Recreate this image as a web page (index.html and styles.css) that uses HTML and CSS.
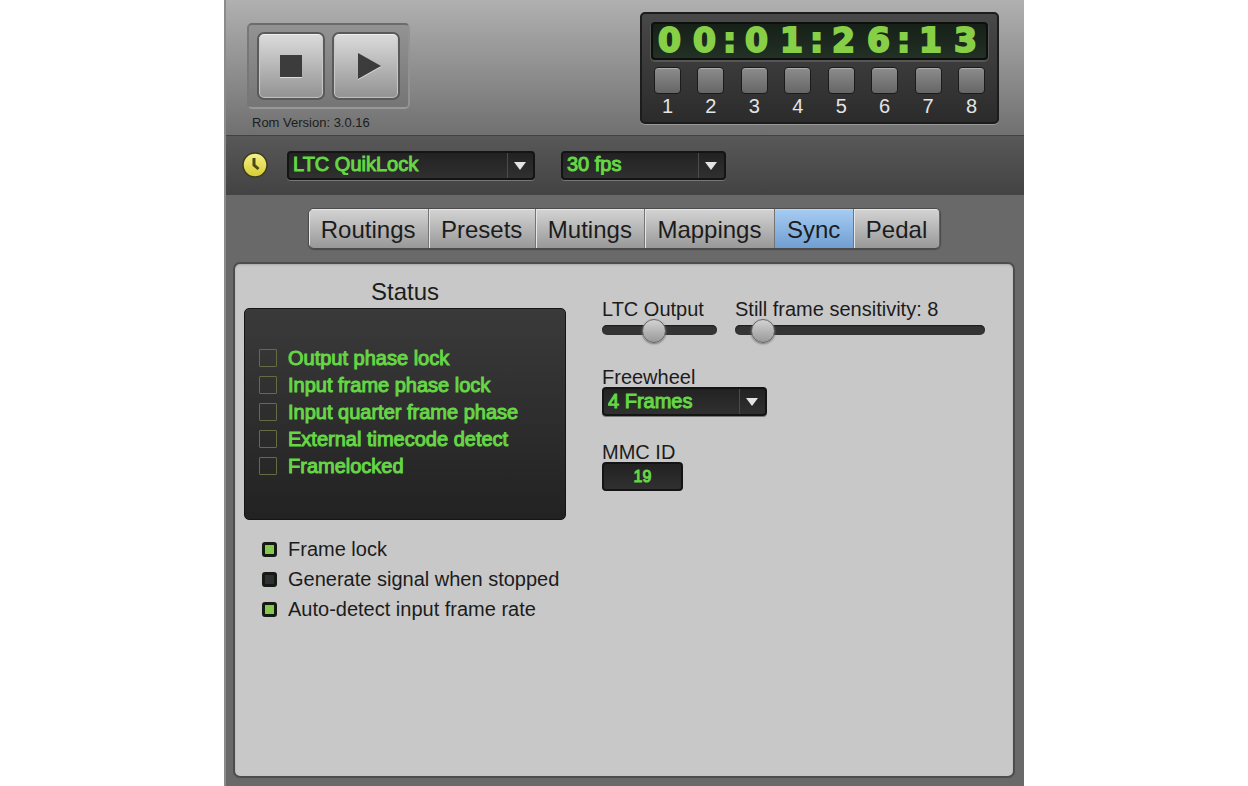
FILE: index.html
```html
<!DOCTYPE html>
<html lang="en">
<head>
    <meta charset="UTF-8">
    <meta name="viewport" content="width=device-width, initial-scale=1.0">
    <title>Sync</title>
    <link rel="stylesheet" href="styles.css">
</head>
<body>
    <div class="app">
        <header class="top">
            <div class="transport">
                <div class="transport-buttons">
                    <button type="button" aria-label="Stop">
                        <svg width="24" height="24" viewBox="0 0 24 24"><path d="M1 2h22v22H1z" fill="#ddd" /><path d="M1 1h22v22H1z" fill="#3c3c3c" /></svg>
                    </button>
                    <button type="button" aria-label="Play">
                        <svg width="26" height="28" viewBox="0 0 26 28"><path d="M3 2v26l23-13z" fill="#ddd" /><path d="M3 1v26l23-13z" fill="#3c3c3c" /></svg>
                    </button>
                </div>
                <p class="rom">Rom Version: 3.0.16</p>
            </div>

            <div class="display">
                <div class="timecode">
                    <span>0</span><span>0</span><i>:</i><span>0</span><span>1</span><i>:</i><span>2</span><span>6</span><i>:</i><span>1</span><span>3</span>
                </div>
                <div class="leds">
                    <div><b></b>1</div>
                    <div><b></b>2</div>
                    <div><b></b>3</div>
                    <div><b></b>4</div>
                    <div><b></b>5</div>
                    <div><b></b>6</div>
                    <div><b></b>7</div>
                    <div><b></b>8</div>
                </div>
            </div>
        </header>

        <div class="bar">
            <svg class="clock" width="28" height="28" viewBox="0 0 28 28">
                <defs>
                    <linearGradient id="face" x1="0" y1="0" x2="0" y2="1">
                        <stop offset="0" stop-color="#f6f18b" />
                        <stop offset="1" stop-color="#d6cc30" />
                    </linearGradient>
                </defs>
                <circle cx="14" cy="14" r="12" fill="url(#face)" stroke="#3b3a20" stroke-width="1.500" />
                <path d="M13 7v7l4.500 4" fill="none" stroke="#4b481c" stroke-width="3" />
            </svg>
            <div class="dropdown mode">
                <select aria-label="Sync mode">
                    <option>LTC QuikLock</option>
                </select>
            </div>
            <div class="dropdown">
                <select aria-label="Frame rate">
                    <option>30 fps</option>
                </select>
            </div>
        </div>

        <main class="content">
            <nav class="tabs">
                <button type="button">Routings</button>
                <button type="button">Presets</button>
                <button type="button">Mutings</button>
                <button type="button">Mappings</button>
                <button type="button" class="active">Sync</button>
                <button type="button">Pedal</button>
            </nav>

            <div class="panel">
                <section class="left">
                    <h2>Status</h2>
                    <div class="status">
                        <label><input type="checkbox" disabled> Output phase lock</label>
                        <label><input type="checkbox" disabled> Input frame phase lock</label>
                        <label><input type="checkbox" disabled> Input quarter frame phase</label>
                        <label><input type="checkbox" disabled> External timecode detect</label>
                        <label><input type="checkbox" disabled> Framelocked</label>
                    </div>
                    <div class="options">
                        <label><input type="checkbox" checked> Frame lock</label>
                        <label><input type="checkbox"> Generate signal when stopped</label>
                        <label><input type="checkbox" checked> Auto-detect input frame rate</label>
                    </div>
                </section>

                <section class="right">
                    <div class="sliders">
                        <div class="field">
                            <label for="ltc">LTC Output</label>
                            <input type="range" id="ltc" min="0" max="100" value="44">
                        </div>
                        <div class="field wide">
                            <label for="still">Still frame sensitivity: 8</label>
                            <input type="range" id="still" min="0" max="110" value="8">
                        </div>
                    </div>
                    <div class="field">
                        <label for="freewheel">Freewheel</label>
                        <div class="dropdown">
                            <select id="freewheel">
                                <option>4 Frames</option>
                            </select>
                        </div>
                    </div>
                    <div class="field">
                        <label for="mmc">MMC ID</label>
                        <input type="text" id="mmc" value="19">
                    </div>
                </section>
            </div>
        </main>
    </div>
</body>
</html>
```

FILE: styles.css
```css
* {
    box-sizing: border-box;
}

body {
    margin: 0;
    background: #fff;
    color: #1c1c1c;
    font-family: "Liberation Sans", Arial, sans-serif;
    font-size: 20px;
}

button, select, input {
    font-family: inherit;
    margin: 0;
}

.app {
    max-width: 800px;
    min-height: 100vh;
    margin: 0 auto;
    display: flex;
    flex-direction: column;
    background: #696969;
    border-left: 2px solid #8b8b8b;
}

/* header */
.top {
    display: flex;
    justify-content: space-between;
    align-items: flex-start;
    padding: 12px 25px 4px 21px;
    background: linear-gradient(#b0b0b0, #707070);
    border-bottom: 1px solid #414141;
}

.transport {
    padding-top: 11px;
}

.transport-buttons {
    display: flex;
    gap: 7px;
    padding: 7px 8px;
    border: 2px solid #777;
    border-top-color: #6c6c6c;
    border-bottom-color: #989898;
    border-right-color: #929292;
    border-radius: 5px;
    background: linear-gradient(#939393, #757575);
}

.transport-buttons button {
    width: 68px;
    height: 68px;
    padding: 0;
    display: flex;
    align-items: center;
    justify-content: center;
    border: 2px solid #5a5a5a;
    border-radius: 7px;
    background: linear-gradient(#dcdcdc, #929292);
    box-shadow: inset 0 1px 1px #f4f4f4, inset 0 0 1px 1px #c4c4c4;
}

.transport-buttons button + button svg {
    margin-left: 4px;
}

.rom {
    margin: 6px 0 0 5px;
    font-size: 13px;
    line-height: 16px;
}

.display {
    width: 359px;
    padding: 8px 9px 3px;
    border: 2px solid #1c1c1c;
    border-radius: 5px;
    background: linear-gradient(#484848, #2b2b2b);
    box-shadow: 0 1px 0 #999;
}

.timecode {
    display: flex;
    height: 38px;
    border: 2px solid #0c0f0c;
    border-radius: 4px;
    background: linear-gradient(#162018, #223025);
    box-shadow: 0 1px 0 1px #555;
    color: #86cf47;
    font-family: "DejaVu Sans", sans-serif;
    font-size: 33px;
    font-weight: bold;
    line-height: 34px;
    -webkit-text-stroke: 2px #86cf47;
}

.timecode span {
    width: 35px;
    padding-left: 5px;
}

.timecode i {
    width: 17px;
    font-style: normal;
}

.leds {
    display: flex;
    justify-content: space-between;
    padding: 7px 3px 0;
    color: #e4e4e4;
    line-height: 25px;
    text-align: center;
}

.leds b {
    display: block;
    width: 27px;
    height: 27px;
    border: 1px solid #1b1b1b;
    border-radius: 4px;
    background: linear-gradient(#8c8c8c, #666);
    box-shadow: inset 0 1px 0 #adadad;
}

/* sync source bar */
.bar {
    display: flex;
    align-items: center;
    height: 59px;
    padding: 0 15px;
    background: linear-gradient(#585858, #434343);
    border-bottom: 1px solid #444;
}

.clock {
    margin-right: 18px;
}

.dropdown {
    position: relative;
    width: 165px;
}

.dropdown.mode {
    width: 248px;
    margin-right: 26px;
}

.dropdown select {
    display: block;
    appearance: none;
    width: 100%;
    height: 29px;
    padding: 0 30px 2px 4px;
    border: 2px solid #141414;
    border-radius: 4px;
    background: linear-gradient(#222, #303030);
    box-shadow: 0 1px 0 #777;
    color: #66d645;
    font-size: 20px;
    -webkit-text-stroke: 1px #66d645;
}

.dropdown::before {
    content: "";
    position: absolute;
    top: 2px;
    right: 27px;
    width: 1px;
    height: 25px;
    background: #4b4b4b;
    pointer-events: none;
}

.dropdown::after {
    content: "";
    position: absolute;
    top: 11px;
    right: 9px;
    border: 6px solid transparent;
    border-top: 8px solid #e4e4e4;
    border-bottom: 0;
    pointer-events: none;
}

/* tabs */
.content {
    flex: 1;
    display: flex;
    flex-direction: column;
    padding: 13px 9px 8px 7px;
}

.tabs {
    display: flex;
    width: 100%;
    max-width: 633px;
    margin: 0 auto 13px;
    border: 1px solid #4b4b4b;
    border-radius: 6px;
    overflow: hidden;
    box-shadow: 0 1px 1px #4a4a4a;
}

.tabs button {
    flex: 1 0 auto;
    height: 39px;
    padding: 3px 8px 0;
    border: 0;
    border-right: 1px solid #747474;
    background: linear-gradient(#d4d4d4, #989898);
    box-shadow: inset 1px 1px 0 #e6e6e6;
    color: #1c1c1c;
    font-size: 24px;
}

.tabs button:last-child {
    border-right: 0;
}

.tabs .active {
    background: linear-gradient(#a6ccf2, #719fd2);
    box-shadow: inset 0 1px 0 #b9d8f6;
}

/* main panel */
.panel {
    flex: 1;
    display: flex;
    gap: 36px;
    padding: 15px 9px;
    border: 2px solid #4c4c4c;
    border-radius: 7px;
    background: #c8c8c8;
    box-shadow: inset 0 1px 2px #a8a8a8;
}

.left {
    width: 322px;
}

h2 {
    margin: 0;
    padding-bottom: 3px;
    font-size: 24px;
    font-weight: normal;
    line-height: 26px;
    text-align: center;
}

.status {
    display: flex;
    flex-direction: column;
    justify-content: center;
    height: 212px;
    padding-left: 14px;
    padding-bottom: 4px;
    border: 1px solid #151515;
    border-radius: 5px;
    background: linear-gradient(#3a3a3a, #222);
    color: #66d645;
    -webkit-text-stroke: 1px #66d645;
}

.status label, .options label {
    display: flex;
    align-items: center;
    gap: 11px;
    line-height: 27px;
}

.status input {
    appearance: none;
    width: 18px;
    height: 18px;
    margin: 0;
    border: 1px solid #656b42;
    border-radius: 1px;
}

.options {
    padding: 14px 0 0 18px;
}

.options label {
    line-height: 30px;
}

.options input {
    appearance: none;
    width: 15px;
    height: 15px;
    border: 3px solid #151b12;
    border-radius: 3px;
    background: #303030;
}

.options input:checked {
    background: #86c84e;
}

.right {
    flex: 1;
    display: flex;
    flex-direction: column;
    gap: 26px;
    padding: 20px 19px 0 0;
}

.sliders {
    display: flex;
    gap: 18px;
}

.field label {
    display: block;
    line-height: 20px;
    white-space: nowrap;
}

.field.wide {
    flex: 1;
}

input[type="range"] {
    appearance: none;
    display: block;
    width: 115px;
    height: 22px;
    background: none;
}

.wide input[type="range"] {
    width: 100%;
}

input[type="range"]::-webkit-slider-runnable-track {
    height: 10px;
    border-radius: 5px;
    background: #343434;
    box-shadow: inset 0 1px 1px #1c1c1c;
}

input[type="range"]::-webkit-slider-thumb {
    appearance: none;
    width: 24px;
    height: 24px;
    margin-top: -6px;
    border: 1px solid #666;
    border-radius: 50%;
    background: linear-gradient(#d2d2d2, #999);
    box-shadow: 0 1px 2px #777;
}

#mmc {
    display: block;
    width: 81px;
    height: 29px;
    padding: 0;
    border: 2px solid #141414;
    border-radius: 4px;
    background: linear-gradient(#222, #303030);
    color: #66d645;
    font-size: 16px;
    text-align: center;
    -webkit-text-stroke: 1px #66d645;
}
```
